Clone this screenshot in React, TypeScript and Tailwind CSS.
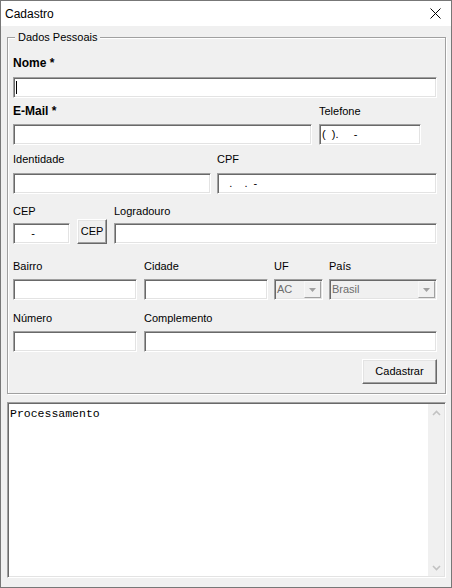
import React from "react";

const sunken =
  "border border-t-[#a0a0a0] border-l-[#a0a0a0] border-b-white border-r-white shadow-[inset_1px_1px_0_#696969,inset_-1px_-1px_0_#e3e3e3]";
const raised =
  "border border-t-white border-l-white border-b-[#696969] border-r-[#696969] shadow-[inset_-1px_-1px_0_#a0a0a0,inset_1px_1px_0_#e3e3e3]";
const edit = `h-[21px] bg-white ${sunken} pl-[2px] flex items-center text-[11px] whitespace-pre`;
const lbl = "text-[11px] leading-[13px] whitespace-nowrap";
const lblBold = "text-[12px] leading-[13px] font-bold whitespace-nowrap";

function DropArrow() {
  return (
    <div className="w-[17px] h-[17px] mr-[1px] bg-[#f0f0f0] border border-t-[#f8f8f8] border-l-[#f8f8f8] border-b-[#a0a0a0] border-r-[#a0a0a0] flex items-center justify-center">
      <svg width="7" height="4" viewBox="0 0 7 4">
        <path d="M0 0 L7 0 L3.5 4 Z" fill="#a0a0a0" />
      </svg>
    </div>
  );
}

function Combo({ value }: { value: string }) {
  return (
    <div className={`h-[21px] bg-[#f0f0f0] ${sunken} flex items-center justify-between text-[11px]`}>
      <span className="pl-[2px] text-[#6d6d6d]">{value}</span>
      <DropArrow />
    </div>
  );
}

export default function App() {
  return (
    <div className="w-[452px] h-[588px] border border-[#777777] bg-[#f0f0f0] flex flex-col overflow-hidden text-black [font-family:'Liberation_Sans',Arial,sans-serif]">
      {/* Title bar */}
      <div className="h-[25px] shrink-0 bg-white flex items-center justify-between">
        <span className="pl-[4px] text-[12px]">Cadastro</span>
        <svg width="11" height="11" viewBox="0 0 11 11" className="mr-[10px]">
          <path d="M0.5 0.5 L10.5 10.5 M10.5 0.5 L0.5 10.5" stroke="#000" strokeWidth="1" />
        </svg>
      </div>

      {/* Body */}
      <div className="flex-1 flex flex-col pl-[6px] pr-[5px] pb-[9px]">
        {/* Group box */}
        <div className="relative mt-[11px] border border-[#a0a0a0] shadow-[inset_1px_1px_0_#ffffff,1px_1px_0_#ffffff] pl-[5px] pr-[8px] pt-[19px] pb-[9px]">
          <span className="absolute left-[7px] -top-[7px] bg-[#f0f0f0] pl-[3px] pr-[2px] text-[11px] leading-[13px]">
            Dados Pessoais
          </span>

          {/* Nome */}
          <div className={lblBold}>Nome *</div>
          <div className={`mt-[7px] ${edit}`}>
            <span className="inline-block w-px h-[13px] bg-black" />
          </div>

          {/* E-Mail / Telefone */}
          <div className="mt-[7px] flex gap-[7px]">
            <div className="w-[299px] flex flex-col">
              <div className={lblBold}>E-Mail *</div>
              <div className={`mt-[6px] ${edit}`}></div>
            </div>
            <div className="w-[102px] flex flex-col">
              <div className={lbl}>Telefone</div>
              <div className={`mt-[6px] ${edit}`}>{"(  ).     -"}</div>
            </div>
          </div>

          {/* Identidade / CPF */}
          <div className="mt-[8px] flex gap-[6px]">
            <div className="w-[198px] flex flex-col">
              <div className={lbl}>Identidade</div>
              <div className={`mt-[7px] ${edit}`}></div>
            </div>
            <div className="w-[220px] flex flex-col">
              <div className={lbl}>CPF</div>
              <div className={`mt-[7px] ${edit}`}>{"   .    .  -"}</div>
            </div>
          </div>

          {/* CEP / Logradouro */}
          <div className="mt-[11px] flex items-end gap-[7px]">
            <div className="w-[57px] flex flex-col">
              <div className={lbl}>CEP</div>
              <div className={`mt-[5px] ${edit}`}>{"     -"}</div>
            </div>
            <button className={`w-[30px] h-[25px] bg-[#f0f0f0] ${raised} text-[11px] flex items-center justify-center`}>
              CEP
            </button>
            <div className="w-[323px] flex flex-col">
              <div className={lbl}>Logradouro</div>
              <div className={`mt-[5px] ${edit}`}></div>
            </div>
          </div>

          {/* Bairro / Cidade / UF / País */}
          <div className="mt-[16px] flex">
            <div className="w-[124px] flex flex-col">
              <div className={lbl}>Bairro</div>
              <div className={`mt-[6px] ${edit}`}></div>
            </div>
            <div className="w-[124px] ml-[7px] flex flex-col">
              <div className={lbl}>Cidade</div>
              <div className={`mt-[6px] ${edit}`}></div>
            </div>
            <div className="w-[49px] ml-[6px] flex flex-col">
              <div className={lbl}>UF</div>
              <div className="mt-[6px]">
                <Combo value="AC" />
              </div>
            </div>
            <div className="w-[108px] ml-[6px] flex flex-col">
              <div className={lbl}>País</div>
              <div className="mt-[6px]">
                <Combo value="Brasil" />
              </div>
            </div>
          </div>

          {/* Número / Complemento */}
          <div className="mt-[12px] flex gap-[7px]">
            <div className="w-[124px] flex flex-col">
              <div className={lbl}>Número</div>
              <div className={`mt-[6px] ${edit}`}></div>
            </div>
            <div className="w-[293px] flex flex-col">
              <div className={lbl}>Complemento</div>
              <div className={`mt-[6px] ${edit}`}></div>
            </div>
          </div>

          {/* Cadastrar */}
          <div className="mt-[7px] flex justify-end">
            <button className={`w-[75px] h-[25px] bg-[#f0f0f0] ${raised} text-[11px] flex items-center justify-center`}>
              Cadastrar
            </button>
          </div>
        </div>

        {/* Memo */}
        <div className={`mt-[8px] flex-1 flex bg-white ${sunken}`}>
          <div className="flex-1 pl-[2px] pt-[4px] text-[11.5px] leading-[13px] [font-family:'Liberation_Mono','Courier_New',monospace]">
            Processamento
          </div>
          <div className="w-[16px] my-[1px] mr-[1px] bg-[#f0f0f0] flex flex-col justify-between">
            <div className="h-[17px] flex items-center justify-center">
              <svg width="9" height="6" viewBox="0 0 9 6">
                <path d="M1 5 L4.5 1.5 L8 5" fill="none" stroke="#c2c2c2" strokeWidth="1.6" />
              </svg>
            </div>
            <div className="h-[17px] flex items-center justify-center">
              <svg width="9" height="6" viewBox="0 0 9 6">
                <path d="M1 1 L4.5 4.5 L8 1" fill="none" stroke="#c2c2c2" strokeWidth="1.6" />
              </svg>
            </div>
          </div>
        </div>
      </div>
    </div>
  );
}
